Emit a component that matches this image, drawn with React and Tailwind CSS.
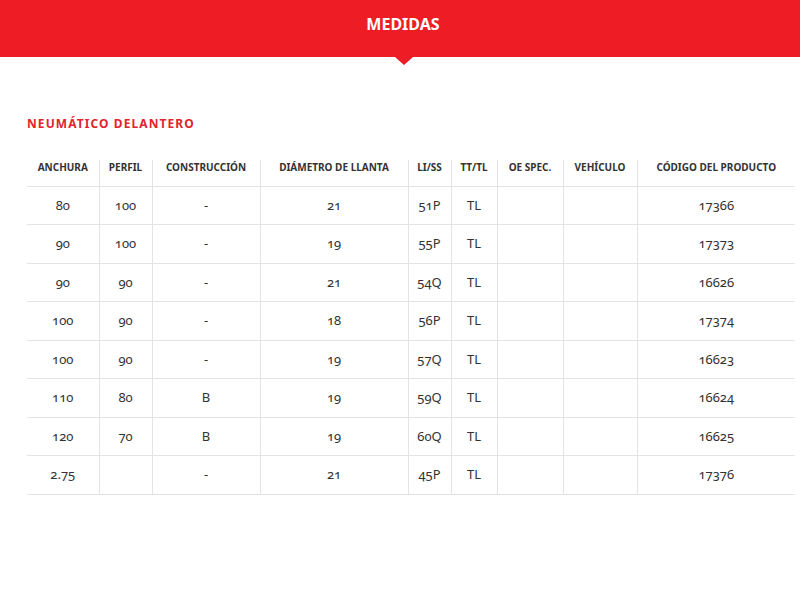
import React from "react";

const columns = [
  { label: "ANCHURA", width: "w-[72px]" },
  { label: "PERFIL", width: "w-[53px]" },
  { label: "CONSTRUCCIÓN", width: "w-[108px]" },
  { label: "DIÁMETRO DE LLANTA", width: "w-[148px]" },
  { label: "LI/SS", width: "w-[43px]" },
  { label: "TT/TL", width: "w-[46px]" },
  { label: "OE SPEC.", width: "w-[66px]" },
  { label: "VEHÍCULO", width: "w-[74px]" },
  { label: "CÓDIGO DEL PRODUCTO", width: "w-[158px]" },
];

const rows = [
  ["80", "100", "-", "21", "51P", "TL", "", "", "17366"],
  ["90", "100", "-", "19", "55P", "TL", "", "", "17373"],
  ["90", "90", "-", "21", "54Q", "TL", "", "", "16626"],
  ["100", "90", "-", "18", "56P", "TL", "", "", "17374"],
  ["100", "90", "-", "19", "57Q", "TL", "", "", "16623"],
  ["110", "80", "B", "19", "59Q", "TL", "", "", "16624"],
  ["120", "70", "B", "19", "60Q", "TL", "", "", "16625"],
  ["2.75", "", "-", "21", "45P", "TL", "", "", "17376"],
];

const App = () => {
  return (
    <div className="w-[800px] h-[600px] bg-white font-['Noto_Sans',sans-serif] text-[#333]">
      {/* red band */}
      <div className="relative h-[57px] bg-[#ee1c25] flex justify-center items-center">
        <h2 className="text-white font-bold text-[16px] leading-none -mt-[9px] ml-[6px]">MEDIDAS</h2>
        <div className="absolute left-[395px] top-[57px] w-0 h-0 border-l-[9px] border-r-[9px] border-t-[8px] border-l-transparent border-r-transparent border-t-[#ee1c25]" />
      </div>

      <div className="pl-[27px] pr-[5px] pt-[59px]">
        <h3 className="text-[#e0252c] font-bold text-[12px] tracking-[0.09em] leading-[16px]">
          NEUMÁTICO DELANTERO
        </h3>

        <table className="mt-[28px] table-fixed border-collapse w-[768px] oldstyle-nums">
          <thead>
            <tr className="border-b border-[#e3e3e3]">
              {columns.map((col, i) => (
                <th
                  key={col.label}
                  className={`${col.width} h-[26px] align-top pt-0 text-[10px] leading-[14px] font-bold text-[#333] whitespace-nowrap ${
                    i > 0 ? "border-l border-[#e3e3e3]" : ""
                  }`}
                >
                  {col.label}
                </th>
              ))}
            </tr>
          </thead>
          <tbody>
            {rows.map((row, r) => (
              <tr key={r} className="border-b border-[#e3e3e3]">
                {row.map((cell, i) => (
                  <td
                    key={i}
                    className={`h-[38.5px] text-center text-[13px] leading-none ${
                      i > 0 ? "border-l border-[#e3e3e3]" : ""
                    }`}
                  >
                    {cell}
                  </td>
                ))}
              </tr>
            ))}
          </tbody>
        </table>
      </div>
    </div>
  );
};

export default App;
